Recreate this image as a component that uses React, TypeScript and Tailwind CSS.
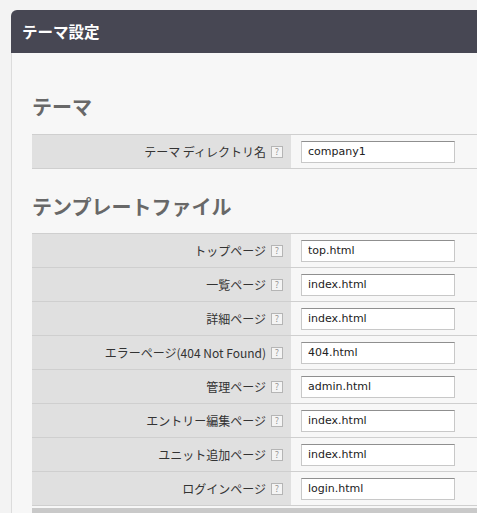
import React from "react";

const font = { fontFamily: '"Noto Sans CJK JP", "DejaVu Sans", sans-serif' };

interface Field {
  label: string;
  value: string;
}

const themeFields: Field[] = [{ label: "テーマ ディレクトリ名", value: "company1" }];

const templateFields: Field[] = [
  { label: "トップページ", value: "top.html" },
  { label: "一覧ページ", value: "index.html" },
  { label: "詳細ページ", value: "index.html" },
  { label: "エラーページ(404 Not Found)", value: "404.html" },
  { label: "管理ページ", value: "admin.html" },
  { label: "エントリー編集ページ", value: "index.html" },
  { label: "ユニット追加ページ", value: "index.html" },
  { label: "ログインページ", value: "login.html" },
];

const HelpIcon = () => (
  <span className="ml-[5px] inline-flex h-[12px] w-[12px] shrink-0 items-center justify-center border border-[#b5b5b5] bg-[#f4f4f4] text-[9px] leading-none text-[#999]">
    ?
  </span>
);

const FieldTable = ({ fields }: { fields: Field[] }) => (
  <div className="border-t border-[#cfcfcf]">
    {fields.map((f) => (
      <div key={f.label} className="flex h-[34px] border-b border-[#cfcfcf]">
        <div className="flex w-[259px] shrink-0 items-center justify-end bg-[#e0e0e0] pr-[8px] text-[12px] text-[#333]">
          <span>{f.label}</span>
          <HelpIcon />
        </div>
        <div className="flex flex-1 items-center bg-[#f7f7f7] pl-[10px]">
          <input
            readOnly
            value={f.value}
            className="h-[22px] w-[154px] border border-[#c8c8c8] border-t-[#8f8f8f] bg-white px-[6px] text-[11px] text-[#222] outline-none"
            style={{ fontFamily: '"DejaVu Sans", sans-serif' }}
          />
        </div>
      </div>
    ))}
  </div>
);

export default function App() {
  return (
    <div className="h-[513px] w-[477px] overflow-hidden bg-[#f3f3f3] pl-[11px] pt-[10px]" style={font}>
      <div className="w-[500px]">
        <div className="flex h-[43px] items-center rounded-tl-[6px] bg-[#474753] pl-[11px] text-[15.5px] font-bold text-white">
          テーマ設定
        </div>
        <div className="border-l border-[#dcdcdc] bg-[#f7f7f7] pl-[20px] pt-[40px]">
          <h2 className="mb-[13px] h-[28px] text-[20px] font-bold leading-[28px] text-[#686868]">テーマ</h2>
          <FieldTable fields={themeFields} />
          <h2 className="mb-[12px] mt-[24px] h-[28px] text-[20px] font-bold leading-[28px] text-[#686868]">
            テンプレートファイル
          </h2>
          <FieldTable fields={templateFields} />
          <div className="mt-[2px] h-[12px] bg-[#c9c9c9]" />
        </div>
      </div>
    </div>
  );
}
